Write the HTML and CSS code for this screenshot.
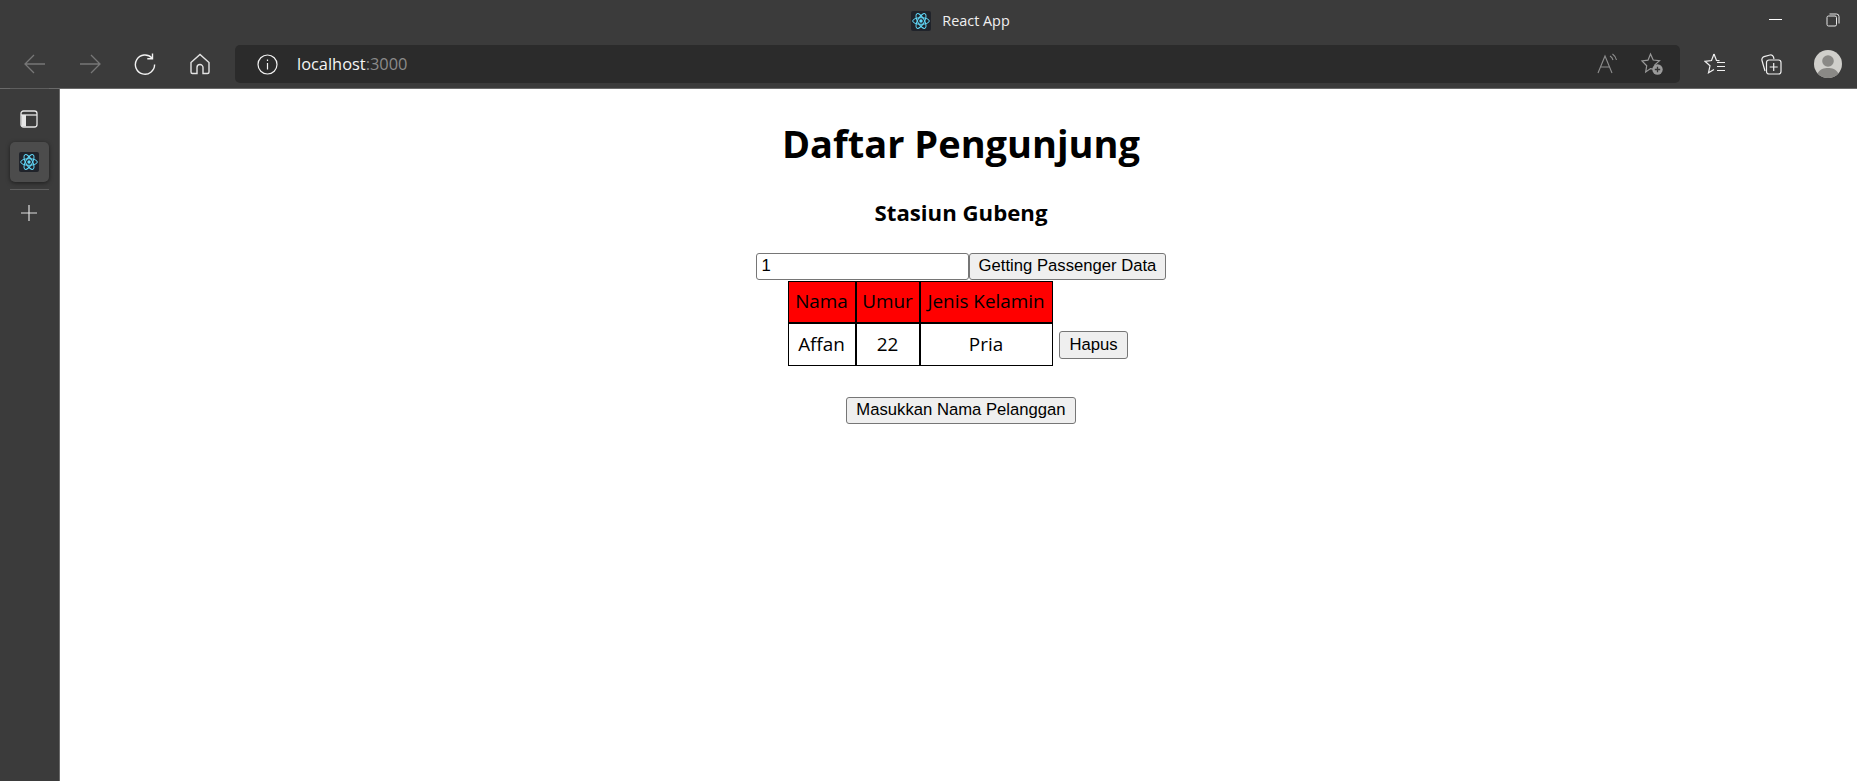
FILE: index.html
```html
<!DOCTYPE html>
<html lang="en">
<head>
  <meta charset="UTF-8">
  <title>React App</title>
  <link rel="stylesheet" href="styles.css">
</head>
<body>
  <svg class="defs" width="0" height="0">
    <symbol id="react" viewBox="0 0 20 20">
      <rect width="20" height="20" rx="2" fill="#20232a"/>
      <circle cx="10" cy="10" r="1.7" fill="#61dafb"/>
      <g fill="none" stroke="#61dafb" stroke-width="1">
        <ellipse cx="10" cy="10" rx="8.3" ry="3.3"/>
        <ellipse cx="10" cy="10" rx="8.3" ry="3.3" transform="rotate(60 10 10)"/>
        <ellipse cx="10" cy="10" rx="8.3" ry="3.3" transform="rotate(120 10 10)"/>
      </g>
    </symbol>
  </svg>

  <header class="browser-top">
    <div class="titlebar">
      <div class="title">
        <svg class="title-icon"><use href="#react"/></svg>
        <span>React App</span>
      </div>
      <div class="window-controls">
        <svg width="14" height="14" viewBox="0 0 14 14"><path d="M0 6.500h13" stroke="#fff" fill="none"/></svg>
        <svg width="14" height="14" viewBox="0 0 14 14" fill="none" stroke="#e8e8e8"><rect x="1" y="3" width="9.500" height="10" rx="1.500"/><path d="M3.500 1h7a2.500 2.500 0 0 1 2.500 2.500v7"/></svg>
      </div>
    </div>
    <div class="toolbar">
      <div class="tool-btn">
        <svg width="22" height="22" viewBox="0 0 22 22" fill="none" stroke="#777" stroke-width="1.3"><path d="M1 11h20M10 2l-9 9 9 9"/></svg>
      </div>
      <div class="tool-btn">
        <svg width="22" height="22" viewBox="0 0 22 22" fill="none" stroke="#777" stroke-width="1.3"><path d="M1 11h20M12 2l9 9-9 9"/></svg>
      </div>
      <div class="tool-btn">
        <svg width="22" height="22" viewBox="0 0 22 22" fill="none" stroke="#f2f2f2" stroke-width="1.4"><path d="M18 5a9.600 9.600 0 1 0 2.600 6.500"/><path d="M18.500 0.500v5.200h-5.200"/></svg>
      </div>
      <div class="tool-btn">
        <svg width="22" height="22" viewBox="0 0 22 22" fill="none" stroke="#e4e4e4" stroke-width="1.4"><path d="M2 9.500 11 1.500l9 8v9.500a1.500 1.500 0 0 1-1.500 1.500H14v-6a3 3 0 0 0-6 0v6H3.500A1.500 1.500 0 0 1 2 19z"/></svg>
      </div>
      <div class="address-bar">
        <svg class="info-icon" width="21" height="21" viewBox="0 0 21 21" fill="none" stroke="#f2f2f2" stroke-width="1.2"><circle cx="10.500" cy="10.500" r="9.500"/><path d="M10.500 9v6.500M10.500 5.500v1.500"/></svg>
        <span class="url">localhost<span class="url-port">:3000</span></span>
        <div class="address-actions">
          <svg width="22" height="22" viewBox="0 0 22 22" fill="none" stroke="#8e8e8e" stroke-width="1.1"><path d="M1 20 8 3l7 17M3.500 14h9"/><path d="M13 3a7 7 0 0 1 3 4M15.500 1a10 10 0 0 1 4 6"/></svg>
          <svg width="24" height="24" viewBox="0 0 24 24"><path d="M10.500 2l2.700 6 6.300.6-4.700 4.300 1 4.700-5.300-1-4.800 3.400 1-6.200L2 9l6-.8z" fill="none" stroke="#9a9a9a" stroke-width="1.2"/><circle cx="17.500" cy="17.500" r="5.200" fill="#9a9a9a"/><path d="M17.500 14.800v5.400M14.800 17.500h5.400" stroke="#333" stroke-width="1.300"/></svg>
        </div>
      </div>
      <div class="tool-right">
        <div class="tool-btn">
          <svg width="24" height="24" viewBox="0 0 24 24" fill="none" stroke="#f0f0f0" stroke-width="1.2"><path d="M10 2l2.500 6.500 3 .2M4 9l-3 .3 5 4.500-1.500 7 5.500-3.300M1 9.300 7.500 8.500 10 2"/><path d="M13 10.500h8M13 14.500h8M13 18.500h8"/></svg>
        </div>
        <div class="tool-btn">
          <svg class="collections-icon" width="24" height="24" viewBox="0 0 24 24" fill="none" stroke="#f0f0f0" stroke-width="1.2"><path d="M6 19 3 8.500A3 3 0 0 1 5 4.700l6-1.700a3 3 0 0 1 3.500 2l.5 2"/><rect x="7.500" y="8" width="14.500" height="14" rx="2.500"/><path d="M14.700 11v8M10.700 15h8"/></svg>
        </div>
        <div class="tool-btn">
          <svg width="28" height="28" viewBox="0 0 28 28"><circle cx="14" cy="14" r="14" fill="#d0cfcb"/><circle cx="14" cy="11" r="5.800" fill="#8a8986"/><path d="M3.500 23.500C6 19 10 18 14 18s8 1 10.500 5.500A14 14 0 0 1 14 28 14 14 0 0 1 3.500 23.500z" fill="#8a8986"/></svg>
        </div>
      </div>
    </div>
  </header>

  <div class="browser-body">
    <aside class="sidebar">
      <svg width="18" height="18" viewBox="0 0 18 18" class="side-panel-icon"><rect x="1" y="1" width="16" height="16" rx="2.500" fill="none" stroke="#e6e6e6" stroke-width="1.300"/><path d="M1 5h16" stroke="#e6e6e6" stroke-width="1.300"/><path d="M1.500 5H6v11.500H3A1.500 1.500 0 0 1 1.500 15z" fill="#e6e6e6"/></svg>
      <div class="side-tab"><svg class="title-icon"><use href="#react"/></svg></div>
      <div class="side-sep"></div>
      <svg width="18" height="18" viewBox="0 0 18 18" class="side-plus"><path d="M9 1v16M1 9h16" stroke="#e0e0e0" stroke-width="1.200"/></svg>
    </aside>

    <main class="page">
      <h1>Daftar Pengunjung</h1>
      <h3>Stasiun Gubeng</h3>
      <div class="fetch-row">
        <input type="text" value="1"><button>Getting Passenger Data</button>
      </div>
      <table class="visitors">
        <thead>
          <tr><th class="col-name">Nama</th><th class="col-age">Umur</th><th class="col-gender">Jenis Kelamin</th><th class="plain"></th></tr>
        </thead>
        <tbody>
          <tr><td>Affan</td><td>22</td><td>Pria</td><td class="plain"><button>Hapus</button></td></tr>
        </tbody>
      </table>
      <div class="add-row">
        <button>Masukkan Nama Pelanggan</button>
      </div>
    </main>
  </div>
</body>
</html>
```

FILE: styles.css
```css
* {
  box-sizing: border-box;
}

html, body {
  height: 100%;
}

body {
  margin: 0;
  display: flex;
  flex-direction: column;
  overflow: hidden;
  background: #3b3b3b;
  font-family: "Open Sans", "Noto Sans", sans-serif;
}

.defs {
  position: absolute;
}

.browser-top {
  height: 89px;
  flex: none;
  background: #3b3b3b;
  border-bottom: 1px solid #6a6a6a;
}

.titlebar {
  height: 44px;
  display: grid;
  grid-template-columns: 1fr auto 1fr;
  padding-left: 64px;
}

.title {
  grid-column: 2;
  display: flex;
  align-items: center;
  gap: 11px;
  padding-bottom: 3px;
  color: #f0f0f0;
  font-size: 14.4px;
}

.title-icon {
  width: 20px;
  height: 20px;
  display: block;
}

.window-controls {
  grid-column: 3;
  justify-self: end;
  display: flex;
  gap: 43px;
  padding: 13px 17px 0 0;
}

.toolbar {
  height: 44px;
  display: flex;
  align-items: flex-start;
  padding-left: 7.5px;
}

.tool-btn {
  width: 55px;
  height: 38px;
  flex: none;
  display: flex;
  align-items: center;
  justify-content: center;
  margin-top: 1px;
}

.address-bar {
  width: 1445px;
  height: 38px;
  flex: none;
  margin: 1px 8px 0 7.5px;
  display: flex;
  align-items: center;
  padding-left: 22px;
  background: #2b2b2b;
  border-radius: 5px;
}

.url {
  margin: 0 0 2px 19px;
  color: #f4f4f4;
  font-size: 16.4px;
}

.url-port {
  color: #8a8a8a;
}

.address-actions {
  margin-left: auto;
  display: flex;
  align-items: center;
  gap: 21px;
  padding-right: 16px;
}

.tool-right {
  display: flex;
}

.tool-right .tool-btn {
  width: 56px;
}

.collections-icon {
  margin-right: 3px;
}

.browser-body {
  flex: 1;
  display: flex;
  min-height: 0;
}

.sidebar {
  width: 60px;
  flex: none;
  display: flex;
  flex-direction: column;
  align-items: center;
  background: #3b3b3b;
  border-right: 1px solid #6a6a6a;
  padding: 21px 1px 0 0;
  position: relative;
}

.sidebar::before {
  content: "";
  position: absolute;
  top: -1px;
  left: 10px;
  width: 39px;
  height: 1px;
  background: #5e5e5e;
}

.side-tab {
  width: 39px;
  height: 40px;
  margin-top: 14px;
  display: flex;
  align-items: center;
  justify-content: center;
  background: #4c4c4c;
  border-radius: 5px;
  box-shadow: 0 1px 4px rgba(0, 0, 0, 0.5);
}

.side-sep {
  width: 39px;
  height: 1px;
  margin-top: 7px;
  background: #5e5e5e;
}

.side-plus {
  margin-top: 14px;
}

.page {
  flex: 1;
  background: #fff;
  color: #000;
  text-align: center;
  padding-left: 5px;
  line-height: 1.33;
}

h1 {
  font-size: 38px;
  margin: 28.7px 0 0;
}

h3 {
  font-size: 22.2px;
  margin: 30px 0 0;
}

input, button {
  font-family: "Liberation Sans", Arial, sans-serif;
  font-size: 16.67px;
  vertical-align: top;
}

input {
  width: 213px;
  height: 27.5px;
  padding: 1px 5px;
  border: 1px solid #767676;
  border-radius: 3px;
}

button {
  height: 27.5px;
  padding: 1px 9px;
  background: #efefef;
  border: 1px solid #767676;
  border-radius: 3px;
  color: #000;
}

.fetch-row {
  margin-top: 25px;
  height: 28px;
}

.visitors {
  width: 347px;
  margin: 0 auto;
  table-layout: fixed;
  border-collapse: separate;
  border-spacing: 0;
  font-size: 18.9px;
}

.visitors th, .visitors td {
  height: 43px;
  padding: 0;
  border: 1px solid #000;
  font-weight: normal;
}

.visitors th {
  height: 42px;
  background: #f00;
}

.col-name {
  width: 68px;
}

.col-age {
  width: 64px;
}

.col-gender {
  width: 133px;
}

.visitors .plain {
  border: none;
  background: none;
  padding: 2px 6px 0;
}

.add-row {
  margin-top: 31px;
}
```
